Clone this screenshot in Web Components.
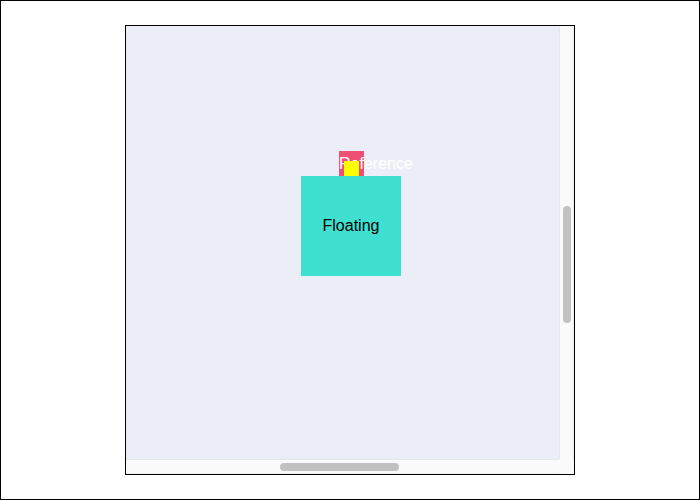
<!DOCTYPE html>
<html lang="en">
<head>
<meta charset="utf-8">
<title>Floating element</title>
<style>
  html, body { margin: 0; background: #fff; }
  body { font: 16px/18px "Liberation Sans", Arial, sans-serif; color: #000; }
</style>
</head>
<body>
<demo-container>
  <scroll-view>
    <reference-box>Reference</reference-box>
    <floating-box>Floating</floating-box>
  </scroll-view>
</demo-container>

<script>
  function define(name, html) {
    const template = document.createElement('template');
    template.innerHTML = html;
    customElements.define(name, class extends HTMLElement {
      constructor() {
        super();
        this.attachShadow({ mode: 'open' }).append(template.content.cloneNode(true));
      }
    });
  }

  define('demo-container', `
    <style>
      :host { display: flex; justify-content: center; box-sizing: border-box; padding: 24px; border: 1px solid #000; }
    </style>
    <slot></slot>`);

  define('scroll-bar', `
    <style>
      :host { display: flex; flex-direction: column; box-sizing: border-box; padding: 0 2px 0 3px; background: #fafafa; border: 0 solid #e7e7e7; border-left-width: 1px; border-right: 1px solid #ededed; }
      :host([horizontal]) { flex-direction: row; padding: 3px 0 2px; border: 0 solid #e7e7e7; border-top-width: 1px; border-bottom: 1px solid #ededed; }
      .before { flex: 180 0 0; }
      .thumb { flex: 117 0 0; background: #c1c1c1; border-radius: 4px; }
      .after { flex: 136 0 0; }
      :host([horizontal]) .before { flex-grow: 154; }
      :host([horizontal]) .thumb { flex-grow: 119; }
      :host([horizontal]) .after { flex-grow: 160; }
    </style>
    <div class="before"></div><div class="thumb"></div><div class="after"></div>`);

  define('scroll-view', `
    <style>
      :host { display: grid; grid-template: minmax(0, 1fr) 15px / minmax(0, 1fr) 15px; box-sizing: border-box; width: 100%; max-width: 450px; aspect-ratio: 1; border: 1px solid #000; background: #fafafa; }
      .canvas { position: relative; overflow: hidden; background: #ebeef6; }
    </style>
    <div class="canvas"><slot></slot></div>
    <scroll-bar></scroll-bar>
    <scroll-bar horizontal></scroll-bar>`);

  define('reference-box', `
    <style>
      :host { position: absolute; left: 213px; top: 125px; display: flex; align-items: center; width: 25px; height: 25px; background: #ef4f74; color: #fff; }
    </style>
    <slot></slot>`);

  define('floating-box', `
    <style>
      :host { position: absolute; left: 175px; top: 150px; display: flex; align-items: center; justify-content: center; width: 100px; height: 100px; background: #40e0d0; }
      .arrow { position: absolute; bottom: 100%; left: 43px; width: 15px; height: 15px; background: #ff0; }
    </style>
    <slot></slot>
    <div class="arrow"></div>`);
</script>
</body>
</html>
